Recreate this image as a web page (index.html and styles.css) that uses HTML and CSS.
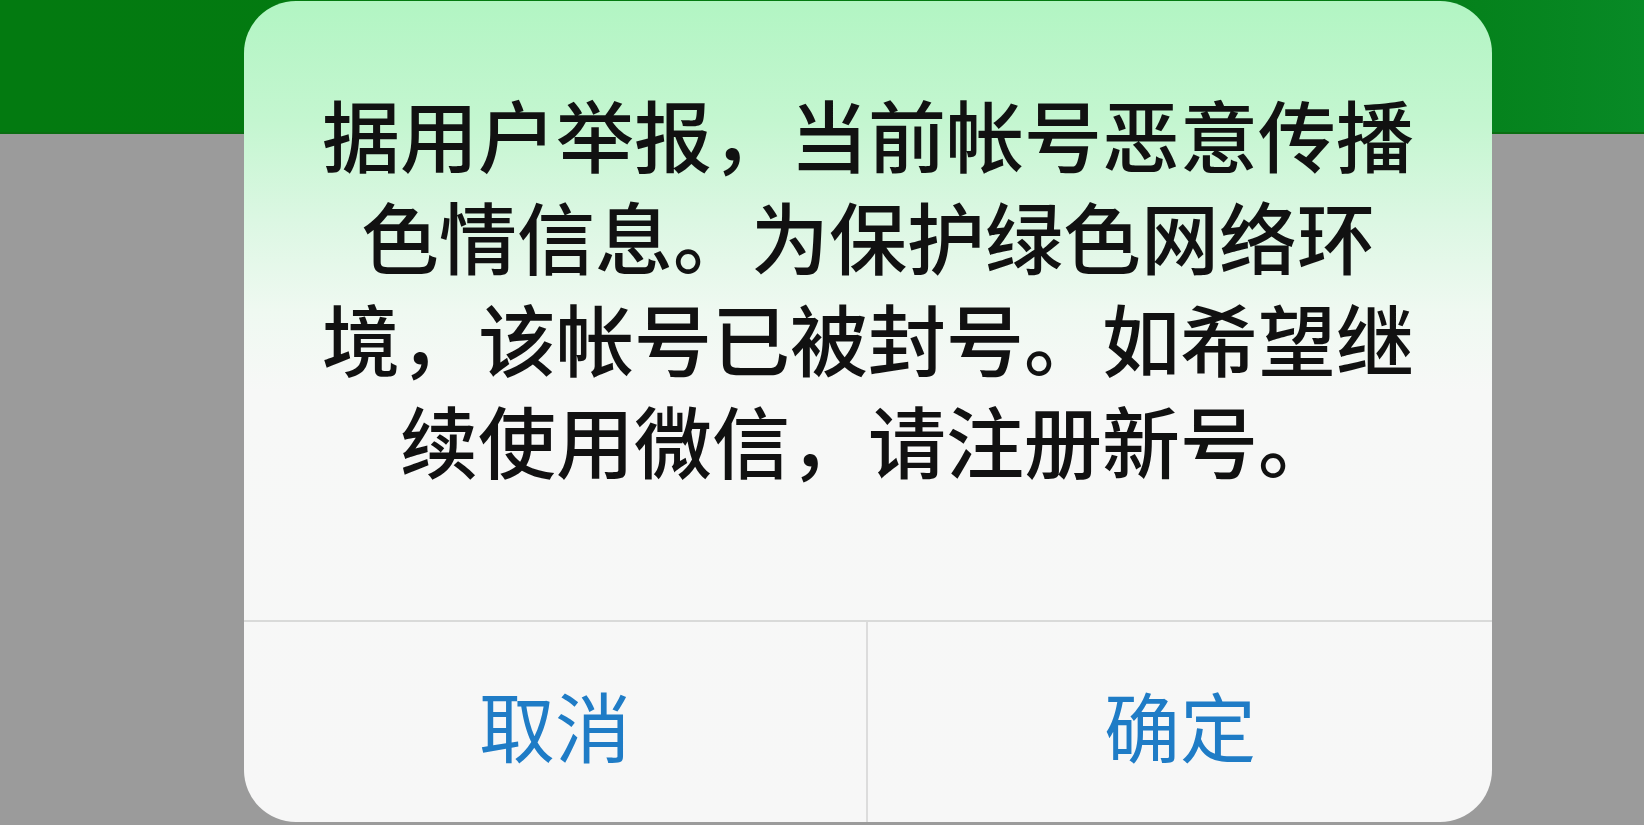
FILE: index.html
```html
<!DOCTYPE html>
<html lang="zh-CN">
<head>
<meta charset="utf-8">
<title>提示</title>
<link rel="stylesheet" href="styles.css">
</head>
<body>
<div class="screen">
  <div class="topbar"></div>
  <div class="backdrop"></div>
  <div class="dialog">
    <div class="message">据用户举报，当前帐号恶意传播<br>色情信息。为保护绿色网络环<br>境，该帐号已被封号。如希望继<br>续使用微信，请注册新号。</div>
    <div class="actions">
      <div class="btn btn-cancel">取消</div>
      <div class="btn btn-ok">确定</div>
    </div>
  </div>
</div>
</body>
</html>
```

FILE: styles.css
```css
html, body {
  margin: 0;
  padding: 0;
  height: 100%;
  overflow: hidden;
}
body {
  background: #9b9b9b;
  font-family: "Noto Sans CJK SC", "Noto Sans", sans-serif;
}
.screen {
  position: relative;
  width: 1644px;
  height: 825px;
  display: flex;
  flex-direction: column;
}
.topbar {
  height: 132px;
  background: linear-gradient(to right, #037a10 0%, #027a12 80%, #088a26 100%);
  border-bottom: 2px solid #0a6e12;
}
.backdrop {
  flex: 1;
  background: #9b9b9b;
}
.dialog {
  position: absolute;
  left: 244px;
  top: 1px;
  width: 1248px;
  height: 821px;
  border-radius: 52px;
  overflow: hidden;
  display: flex;
  flex-direction: column;
  background: linear-gradient(to bottom, #b2f5c3 0px, #c4f6d0 120px, #dcf7e3 220px, #eff9f1 310px, #f7f8f7 390px, #f7f7f7 100%);
}
.message {
  height: 619px;
  box-sizing: border-box;
  padding: 81px 0 0 0;
  text-align: center;
  font-size: 78px;
  line-height: 102px;
  font-weight: 500;
  color: #111111;
}
.actions {
  flex: 1;
  display: flex;
  border-top: 2px solid #d9dad9;
}
.btn {
  display: flex;
  align-items: center;
  justify-content: center;
  font-size: 76px;
  color: #1f7cc6;
  padding-top: 4px;
  box-sizing: border-box;
}
.btn-cancel {
  width: 624px;
  border-right: 2px solid #dcdcdc;
}
.btn-ok {
  flex: 1;
}
```
